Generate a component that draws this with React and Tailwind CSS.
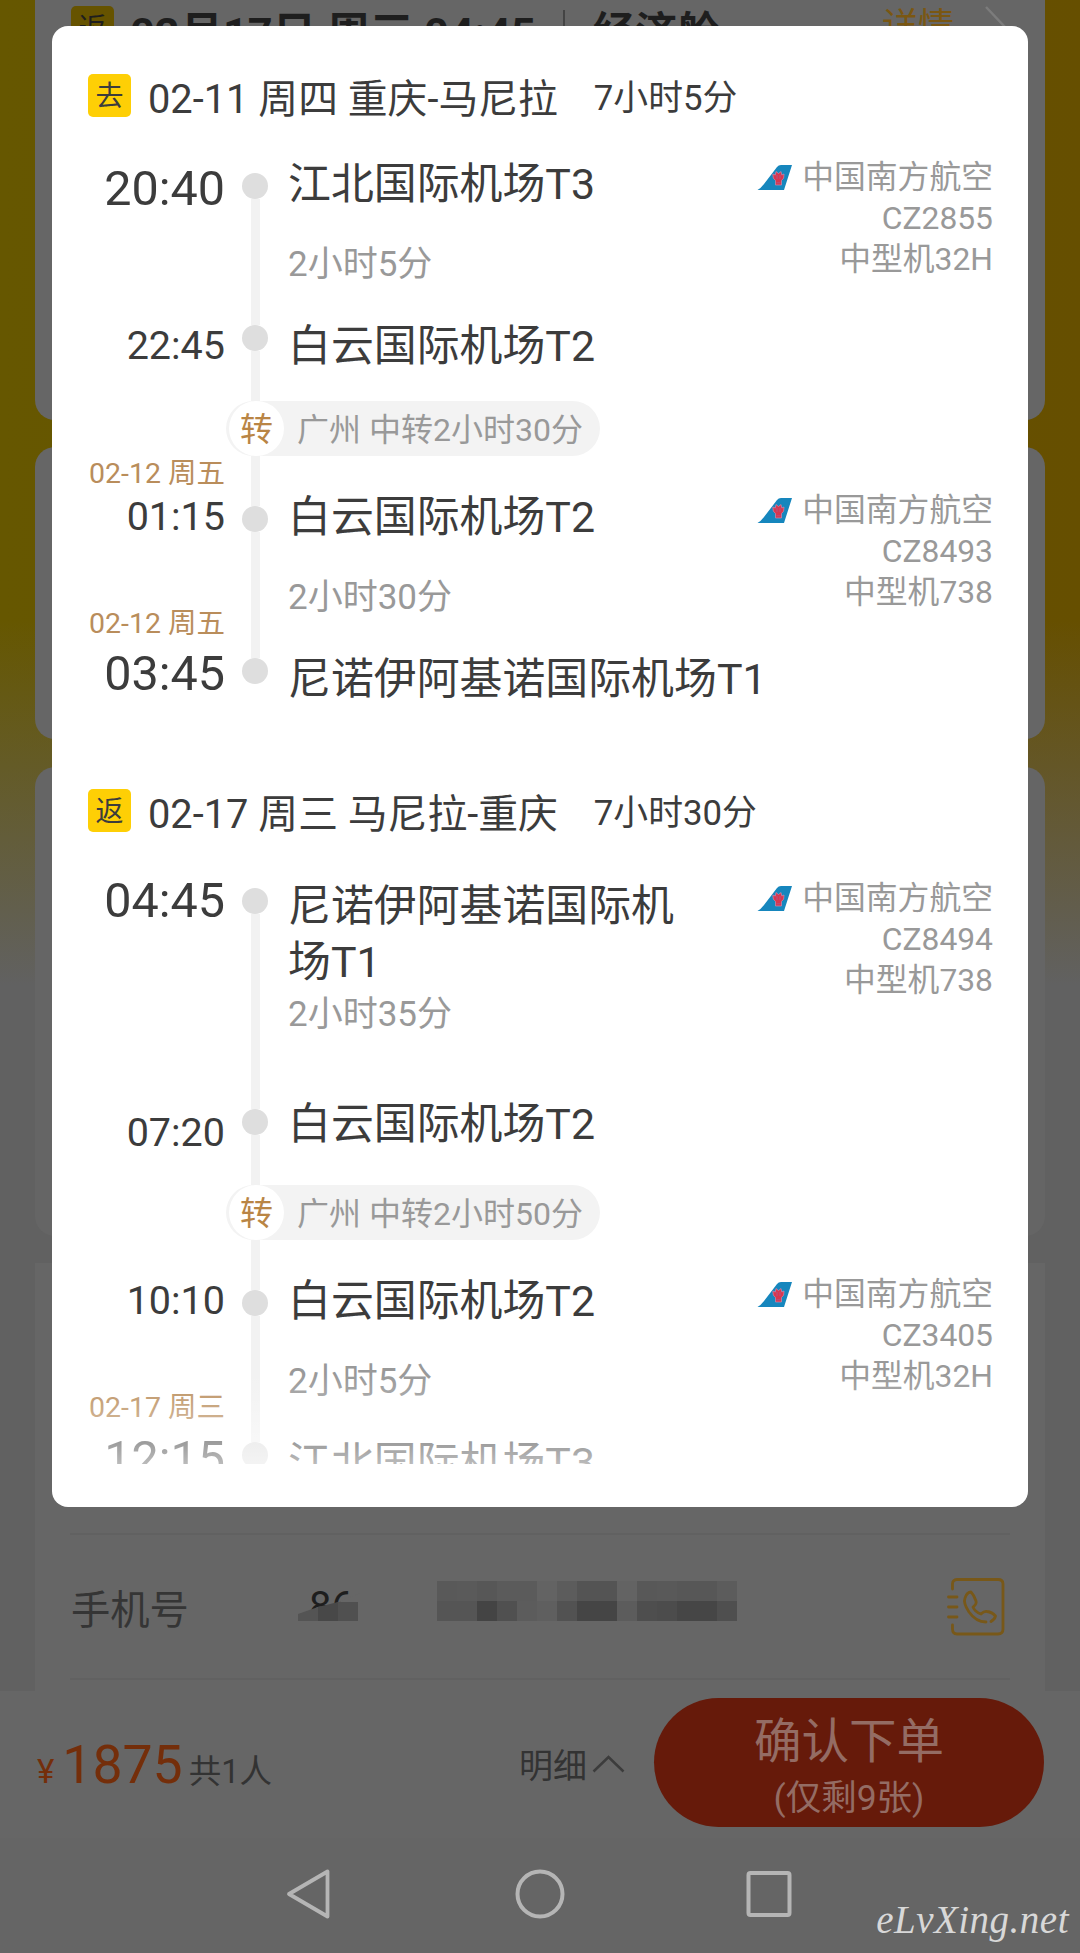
import clsx from 'clsx';

const outbound = {
  badge: '去',
  title: '02-11 周四 重庆-马尼拉',
  duration: '7小时5分',
  stops: [
    {
      time: '20:40', big: true, name: '江北国际机场T3', duration: '2小时5分',
      flight: { no: 'CZ2855', plane: '中型机32H' },
      row: 'h-[150px]', timeGap: 'mt-[15px]', railGap: 'h-[23px]', nameGap: 'mt-[6px]', durationGap: 'mt-[33px]', flightGap: 'mt-[7px]',
      first: true,
    },
    {
      time: '22:45', name: '白云国际机场T2',
      row: 'h-[101px]', timeGap: 'mt-[26px]', railGap: 'h-[25px]', nameGap: 'mt-[18px]',
    },
    { transfer: '广州 中转2小时30分' },
    {
      date: '02-12 周五', time: '01:15', name: '白云国际机场T2', duration: '2小时30分',
      flight: { no: 'CZ8493', plane: '中型机738' },
      row: 'h-[144px]', dateGap: 'mt-[2px]', timeGap: 'mt-[7px]', railGap: 'h-[50px]', nameGap: 'mt-[33px]', durationGap: 'mt-[33px]', flightGap: 'mt-[34px]',
    },
    {
      date: '02-12 周五', time: '03:45', big: true, name: '尼诺伊阿基诺国际机场T1',
      row: 'h-[160px]', dateGap: 'mt-[8px]', timeGap: 'mt-[10px]', railGap: 'h-[58px]', nameGap: 'mt-[51px]',
      last: true,
    },
  ],
};

const inbound = {
  badge: '返',
  title: '02-17 周三 马尼拉-重庆',
  duration: '7小时30分',
  stops: [
    {
      time: '04:45', big: true, name: '尼诺伊阿基诺国际机场T1', duration: '2小时35分',
      flight: { no: 'CZ8494', plane: '中型机738' },
      row: 'h-[225px]', timeGap: 'mt-[12px]', railGap: 'h-[23px]', nameGap: 'mt-[13px]', durationGap: 'mt-[5px]', flightGap: 'mt-[13px]',
      first: true,
    },
    {
      time: '07:20', name: '白云国际机场T2',
      row: 'h-[95px]', timeGap: 'mt-[23px]', railGap: 'h-[19px]', nameGap: 'mt-[6px]',
    },
    { transfer: '广州 中转2小时50分' },
    {
      time: '10:10', name: '白云国际机场T2', duration: '2小时5分',
      flight: { no: 'CZ3405', plane: '中型机32H' },
      row: 'h-[144px]', timeGap: 'mt-[41px]', railGap: 'h-[50px]', nameGap: 'mt-[33px]', durationGap: 'mt-[33px]', flightGap: 'mt-[34px]',
    },
    {
      date: '02-17 周三', time: '12:15', big: true, name: '江北国际机场T3',
      row: 'h-[160px]', dateGap: 'mt-[8px]', timeGap: 'mt-[11px]', railGap: 'h-[58px]', nameGap: 'mt-[51px]',
      last: true,
    },
  ],
};

// Shades of the masked phone number, one per 20px cell
const maskTop = ['#595959', '#5a5a5a', '#575757', '#5b5b5b', '#5b5b5b', '#636363', '#5c5c5c', '#545454', '#545454', '#636363', '#585858', '#595959', '#575757', '#575757', '#5c5c5c'];
const maskBottom = ['#555555', '#555555', '#444444', '#505050', '#5c5c5c', '#5f5f5f', '#525252', '#454545', '#454545', '#5c5c5c', '#4e4e4e', '#4c4c4c', '#464646', '#464646', '#4f4f4f'];

function AirlineLogo() {
  return (
    <svg width="36" height="27" viewBox="0 0 36 27">
      <path d="M0.500 26 Q4 24 7 20 L20 3 Q21.500 1 24 1 H35 L27 26 Z" fill="#1686bd" />
      <path
        d="M15.800 10 Q15.500 15 18.500 16.500 V21 H24.500 V16.500 Q27.500 15 27 10 L24.800 11 L24 7.500 L21.500 9.500 L19 7.500 L18.300 11 Z"
        fill="#d9364e"
        stroke="#c88bb0"
        strokeWidth="0.700"
      />
      <path d="M20 11 V15 M23 11 V15 M19.500 18.800 H23.500" stroke="#a95c93" strokeWidth="0.800" />
    </svg>
  );
}

function Transfer({ text }) {
  return (
    <div className="ml-[174px] flex h-[55px] w-[374px] items-center rounded-full bg-[#f3f3f3] pl-[3px]">
      <div className="flex size-[55px] items-center justify-center rounded-full bg-white pt-[2px] text-[33px] leading-none text-[#b98545]">
        转
      </div>
      <span className="ml-[13px] pt-[3px] text-[32px] leading-[55px] whitespace-nowrap text-[#999]">{text}</span>
    </div>
  );
}

function Stop({ stop }) {
  return (
    <div className={clsx('flex', stop.row)}>
      <div className="flex w-[174px] shrink-0 flex-col items-end pr-px whitespace-nowrap">
        {stop.date && (
          <div className={clsx('text-[28.500px] leading-[32px] text-[#b98d5b]', stop.dateGap)}>{stop.date}</div>
        )}
        <div
          className={clsx(
            'text-[#3c3c3c]',
            stop.big ? 'text-[48.500px] leading-[48px]' : 'text-[39.500px] leading-[40px]',
            stop.timeGap
          )}
        >
          {stop.time}
        </div>
      </div>

      {/* Rail */}
      <div className="flex w-[58px] shrink-0 flex-col items-center">
        <div className={clsx('w-[9px] shrink-0', stop.railGap, !stop.first && 'bg-[#f2f2f2]')} />
        <div className="size-[26px] shrink-0 rounded-full bg-[#dedede]" />
        {!stop.last && <div className="w-[9px] grow bg-[#f2f2f2]" />}
      </div>

      <div className={clsx('ml-[4px] shrink-0', stop.flight ? 'w-[401px]' : 'w-[600px]')}>
        <div className={clsx('text-[42.900px] leading-[56px] text-[#3c3c3c]', stop.nameGap)}>{stop.name}</div>
        {stop.duration && (
          <div className={clsx('text-[35px] leading-[40px] text-[#999]', stop.durationGap)}>{stop.duration}</div>
        )}
      </div>

      {stop.flight && (
        <div className="mr-[35px] grow text-right text-[31.800px] leading-[41px] whitespace-nowrap text-[#999]">
          <div className={clsx('flex items-center justify-end', stop.flightGap)}>
            <AirlineLogo />
            <span className="ml-[9px]">中国南方航空</span>
          </div>
          <div>{stop.flight.no}</div>
          <div>{stop.flight.plane}</div>
        </div>
      )}
    </div>
  );
}

function Trip({ trip, className }) {
  return (
    <section className={className}>
      <div className="mb-[33px] ml-[36px] flex h-[43px] leading-[43px] whitespace-nowrap text-[#3c3c3c]">
        <div className="size-[43px] rounded-[5px] bg-[#fecf05] text-center text-[28px] leading-[45px]">{trip.badge}</div>
        <h2 className="ml-[17px] mt-[4px] text-[39.800px]">{trip.title}</h2>
        <span className="ml-[36px] mt-[3px] text-[34.800px]">{trip.duration}</span>
      </div>
      {trip.stops.map((stop, index) =>
        stop.transfer ? <Transfer key={index} text={stop.transfer} /> : <Stop key={index} stop={stop} />
      )}
    </section>
  );
}

function PhoneMask() {
  return (
    <svg width="440" height="50" viewBox="0 -6 440 50">
      <path d="M0 34 L24 22 L62 6 V44 H0 Z" fill="#666" />
      <path d="M0 34 V27 L20 20 V34 Z" fill="#545454" />
      <path d="M20 34 V20 L40 15 V34 Z" fill="#484848" />
      <path d="M40 34 V15 H60 V34 Z" fill="#505050" />
      {maskTop.map((color, i) => (
        <rect key={i} x={139 + i * 20} y="-6" width="20" height="20" fill={color} />
      ))}
      {maskBottom.map((color, i) => (
        <rect key={i} x={139 + i * 20} y="14" width="20" height="20" fill={color} />
      ))}
    </svg>
  );
}

function ContactIcon() {
  return (
    <svg width="58" height="58" viewBox="0 0 58 58" fill="none" stroke="#785819" strokeWidth="2.800" strokeLinecap="round" strokeLinejoin="round">
      <path d="M5.500 11 V6 Q5.500 1.500 10 1.500 H51 Q56 1.500 56 6 V51 Q56 56 51 56 H10 Q5.500 56 5.500 51 V47" />
      <path d="M1.500 19 H10 M1.500 29 H10 M1.500 39 H10" />
      <path d="M39 44 Q29 44 22 34 Q16 25 18 20 Q20 14 24 14 Q27 17 29 23 Q30 26 26 29 Q28 34 34 36 Q37 33 40 33.500 Q45 34 48.500 38 Q48 41 44 43.500" />
    </svg>
  );
}

function OrderPage() {
  return (
    <div className="flex h-full flex-col bg-[#666]">
      <div className="h-[1691px] shrink-0 overflow-hidden bg-linear-to-r from-[#665700] to-[#664f00]">
        <div className="flex h-full flex-col bg-[linear-gradient(to_bottom,transparent_620px,#616161_985px)] px-[35px]">
          {/* Return flight card */}
          <div className="h-[420px] shrink-0 rounded-b-[20px] bg-[#666]">
            <div className="flex pt-[6px] pl-[36px] whitespace-nowrap text-[#1e1e1e]">
              <div className="size-[43px] rounded-[5px] bg-[#665300] text-center text-[28px] leading-[45px]">返</div>
              <div className="ml-[16px] mt-[5px] w-[406px] text-[43.300px] leading-[46px] font-bold">02月17日 周三 04:45</div>
              <div className="ml-[27px] mt-[4px] h-[34px] w-[2px] bg-[#444]" />
              <div className="ml-[28px] mt-[4px] text-[42px] leading-[46px] font-bold">经济舱</div>
              <div className="ml-auto mt-px text-[36px] leading-[40px] text-[#7a5712]">详情</div>
              <svg className="mr-[38px] ml-[29px]" width="24" height="42" viewBox="0 0 24 42" fill="none" stroke="#7c7c7c" strokeWidth="2.500">
                <path d="M3 1 L21 20 L3 40" />
              </svg>
            </div>
          </div>
          <div className="mt-[27px] h-[292px] shrink-0 rounded-[20px] bg-[#666]" />
          <div className="mt-[28px] h-[469px] shrink-0 rounded-[20px] bg-[#656565]" />

          {/* Passenger form */}
          <div className="mt-[27px] grow bg-[#666] px-[35px] pt-[270px]">
            <div className="flex h-[147px] border-y-2 border-[#616161]">
              <span className="mt-[47px] ml-px w-[227px] text-[39.300px] leading-[58px] text-[#353535]">手机号</span>
              <div className="mt-[46px] grid">
                <span className="col-start-1 row-start-1 ml-[11px] mt-[3px] text-[40px] leading-[46px] text-[#1e1e1e]">86</span>
                <div className="col-start-1 row-start-1">
                  <PhoneMask />
                </div>
              </div>
              <div className="mt-[43px] mr-[5px] ml-auto">
                <ContactIcon />
              </div>
            </div>
          </div>
        </div>
      </div>

      {/* Order bar */}
      <div className="flex h-[147px] shrink-0 pr-[36px] pl-[37px] whitespace-nowrap">
        <div className="flex h-[110px] items-baseline pt-[47px] text-[#333]">
          <span className="text-[33px] leading-none text-[#742e0a]">¥</span>
          <span className="ml-[8px] text-[53.500px] leading-none text-[#742e0a]">1875</span>
          <span className="ml-[6px] text-[32.500px] leading-none">共1人</span>
        </div>
        <div className="mt-[55px] ml-auto flex h-[40px] text-[34px] leading-[40px] text-[#333]">
          明细
          <svg className="mt-[9px] ml-[5px]" width="33" height="18" viewBox="0 0 33 18" fill="none" stroke="#3c3c3c" strokeWidth="2.500">
            <path d="M1.500 16.500 L16.500 2 L31.500 16.500" />
          </svg>
        </div>
        <div className="mt-[7px] ml-[29px] flex h-[129px] w-[390px] flex-col items-center rounded-full bg-[#661a0a] text-[#946c64]">
          <span className="mt-[16px] text-[47.500px] leading-[56px]">确认下单</span>
          <span className="mt-[6px] text-[35.500px] leading-[44px]">(仅剩9张)</span>
        </div>
      </div>

      {/* System navigation */}
      <div className="flex grow items-start bg-[#656565] pt-[30px]">
        <svg className="ml-[285px]" width="46" height="52" viewBox="0 0 46 52" fill="none" stroke="#b5b5b5" strokeWidth="3.800" strokeLinejoin="round">
          <path d="M42.500 3.500 V48.500 L4 26 Z" />
        </svg>
        <svg className="ml-[183px]" width="52" height="52" viewBox="0 0 52 52" fill="none" stroke="#b5b5b5" strokeWidth="4">
          <circle cx="26" cy="26" r="22.500" />
        </svg>
        <svg className="ml-[178px]" width="50" height="52" viewBox="0 0 50 52" fill="none" stroke="#b5b5b5" strokeWidth="4">
          <rect x="4.500" y="5" width="41" height="42" rx="2" />
        </svg>
      </div>
    </div>
  );
}

export default function App() {
  return (
    <div className="relative h-[1953px] w-[1080px] overflow-hidden font-[Roboto,'Noto_Sans_CJK_SC',sans-serif]">
      <OrderPage />

      {/* Itinerary dialog */}
      <div className="absolute top-[26px] left-[52px] h-[1481px] w-[976px] rounded-[16px] bg-white">
        <div className="relative h-[1438px] overflow-hidden">
          <Trip trip={outbound} className="pt-[48px]" />
          <Trip trip={inbound} className="pt-[29px]" />
          <div className="absolute inset-x-0 bottom-0 h-[90px] bg-linear-to-b from-white/0 to-white/65" />
        </div>
      </div>

      <div className="absolute right-[11px] bottom-[9px] font-['Liberation_Serif',serif] text-[39px] leading-[48px] tracking-[0.500px] text-[#d8d8d8] italic">
        eLvXing.net
      </div>
    </div>
  );
}
